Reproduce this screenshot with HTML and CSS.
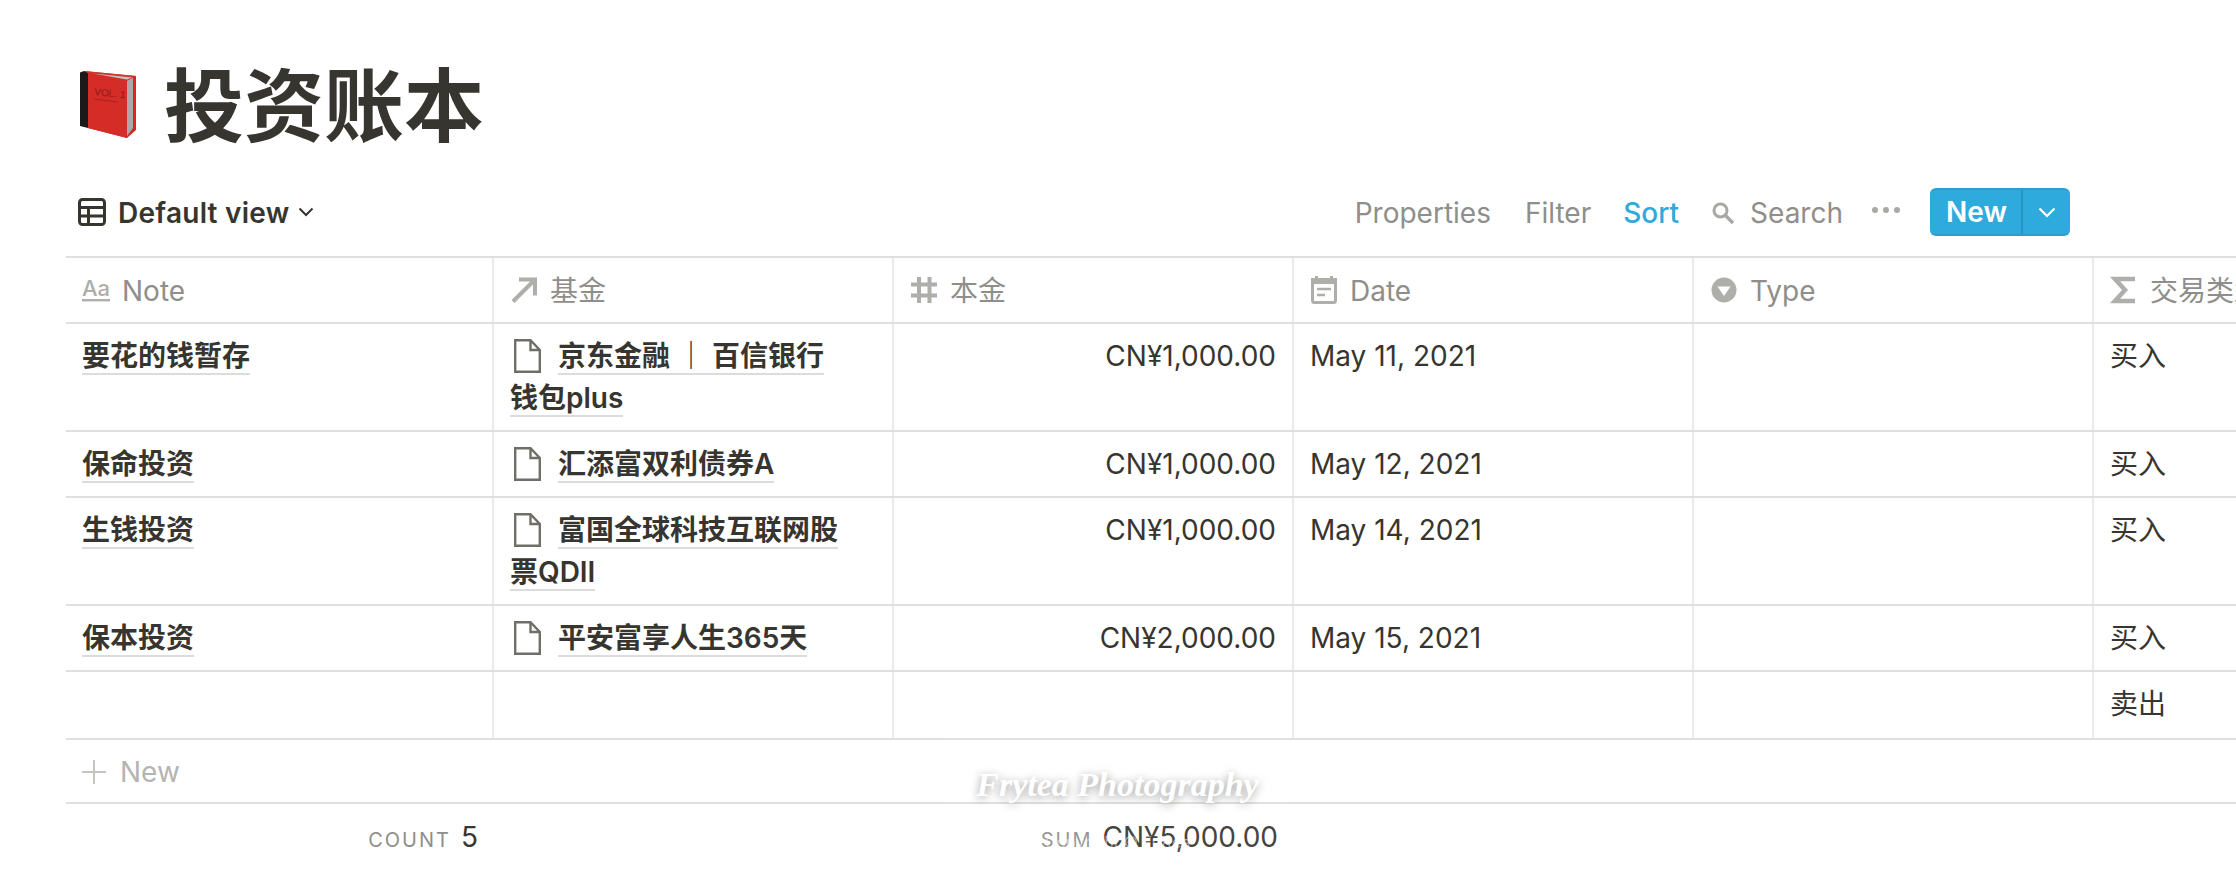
FILE: index.html
```html
<!DOCTYPE html>
<html lang="zh">
<head>
<meta charset="utf-8">
<title>投资账本</title>
<link rel="stylesheet" href="styles.css">
</head>
<body>
<svg class="defs" width="0" height="0" aria-hidden="true">
  <symbol id="page" viewBox="0 0 27 34"><path d="M1.200 1.200H16.500L25.800 11V32.800H1.200Z M16.500 1.200V11H25.800" fill="none" stroke="#6f6e69" stroke-width="2.400"/></symbol>
</svg>
<main class="page">
  <header class="title-row">
    <svg class="book" viewBox="0 0 56 68" aria-hidden="true">
      <path d="M4 1L56 6V60L47 68L8 58Z" fill="#d12a26"/>
      <path d="M0 2.500L4 1L8 3V58L0 56Z" fill="#1b1919"/>
      <path d="M4 1L56 6L47 11L8 3Z" fill="#c93a2e"/>
      <path d="M13 3.500L52 7.500L47 9.500Z" fill="#c4c4c4"/>
      <path d="M47 11L53 7.500V58L47 66Z" fill="#a9a9a9"/>
      <path d="M8 3L47 11V68L8 58Z" fill="#d62c28"/>
      <text class="book-vol" x="14" y="25" transform="rotate(6 14 25)">VOL. 1</text>
      <path d="M14 29L38 32" stroke="#a8221e" stroke-width="1.200"/>
    </svg>
    <h1 class="title">投资账本</h1>
  </header>

  <div class="toolbar">
    <div class="view-select">
      <svg class="view-icon" viewBox="0 0 28 28" aria-hidden="true"><rect x="1.500" y="1.500" width="25" height="25" rx="3" fill="none" stroke="#37352f" stroke-width="3"/><path d="M1.500 9.500H26.500M1.500 18H26.500M10.500 9.500V26.500" stroke="#37352f" stroke-width="3" fill="none"/></svg>
      <span class="view-name">Default view</span>
      <svg class="view-chevron" viewBox="0 0 16 10" aria-hidden="true"><path d="M1.500 1.500L8 8L14.500 1.500" fill="none" stroke="#37352f" stroke-width="2"/></svg>
    </div>
    <div class="actions">
      <span class="action action-first">Properties</span>
      <span class="action">Filter</span>
      <span class="action action-on">Sort</span>
      <span class="action search">
        <svg class="search-icon" viewBox="0 0 24 24" aria-hidden="true"><circle cx="9.500" cy="9.500" r="6.500" fill="none" stroke="#a9a8a5" stroke-width="3"/><path d="M14.500 14.500L22 22" stroke="#a9a8a5" stroke-width="3.400"/></svg>
        Search
      </span>
      <svg class="dots" viewBox="0 0 28 6" aria-hidden="true"><circle cx="3" cy="3" r="3" fill="#a9a8a5"/><circle cx="14" cy="3" r="3" fill="#a9a8a5"/><circle cx="25" cy="3" r="3" fill="#a9a8a5"/></svg>
      <div class="new-btn">
        <span class="new-label">New</span>
        <span class="new-arrow"><svg viewBox="0 0 18 11" aria-hidden="true"><path d="M1.500 1.500L9 9L16.500 1.500" fill="none" stroke="#fff" stroke-width="2.200"/></svg></span>
      </div>
    </div>
  </div>

  <section class="table">
    <div class="row head">
      <div class="cell"><svg class="hicon" viewBox="0 0 28 28" aria-hidden="true"><text class="aa" x="0" y="20">Aa</text><rect y="23" width="28" height="2.400" fill="#aeaeab"/></svg>Note</div>
      <div class="cell"><svg class="hicon" viewBox="0 0 28 28" aria-hidden="true"><path d="M9 3.500H25V19.500M24 4.500L3 25.500" fill="none" stroke="#aeaeab" stroke-width="4"/></svg>基金</div>
      <div class="cell"><svg class="hicon" viewBox="0 0 28 28" aria-hidden="true"><path d="M9 1V27M19.500 1V27M1 8.500H27M1 19.500H27" fill="none" stroke="#aeaeab" stroke-width="4"/></svg>本金</div>
      <div class="cell"><svg class="hicon" viewBox="0 0 28 28" aria-hidden="true"><path d="M6.500 0V4M21.500 0V4" stroke="#aeaeab" stroke-width="3"/><rect x="2.500" y="3.500" width="23" height="23" rx="2" fill="none" stroke="#aeaeab" stroke-width="3"/><rect x="1" y="2" width="26" height="6" fill="#aeaeab"/><path d="M7 13H21M7 19H15" stroke="#aeaeab" stroke-width="2.600"/></svg>Date</div>
      <div class="cell"><svg class="hicon" viewBox="0 0 28 28" aria-hidden="true"><circle cx="14" cy="14" r="12.500" fill="#aeaeab"/><path d="M7.500 10.500H20.500L14 20Z" fill="#fff"/></svg>Type</div>
      <div class="cell"><svg class="hicon" viewBox="0 0 28 28" aria-hidden="true"><path d="M25 3H5L15 14L5 25H25" fill="none" stroke="#aeaeab" stroke-width="4.500"/></svg>交易类型</div>
    </div>

    <div class="row">
      <div class="cell strong"><span class="link">要花的钱暂存</span></div>
      <div class="cell strong rel"><svg class="pg" aria-hidden="true"><use href="#page"/></svg><span class="link">京东金融 ｜ 百信银行钱包plus</span></div>
      <div class="cell num">CN¥1,000.00</div>
      <div class="cell">May 11, 2021</div>
      <div class="cell"></div>
      <div class="cell">买入</div>
    </div>
    <div class="row">
      <div class="cell strong"><span class="link">保命投资</span></div>
      <div class="cell strong rel"><svg class="pg" aria-hidden="true"><use href="#page"/></svg><span class="link">汇添富双利债券A</span></div>
      <div class="cell num">CN¥1,000.00</div>
      <div class="cell">May 12, 2021</div>
      <div class="cell"></div>
      <div class="cell">买入</div>
    </div>
    <div class="row">
      <div class="cell strong"><span class="link">生钱投资</span></div>
      <div class="cell strong rel"><svg class="pg" aria-hidden="true"><use href="#page"/></svg><span class="link">富国全球科技互联网股票QDII</span></div>
      <div class="cell num">CN¥1,000.00</div>
      <div class="cell">May 14, 2021</div>
      <div class="cell"></div>
      <div class="cell">买入</div>
    </div>
    <div class="row">
      <div class="cell strong"><span class="link">保本投资</span></div>
      <div class="cell strong rel"><svg class="pg" aria-hidden="true"><use href="#page"/></svg><span class="link">平安富享人生365天</span></div>
      <div class="cell num">CN¥2,000.00</div>
      <div class="cell">May 15, 2021</div>
      <div class="cell"></div>
      <div class="cell">买入</div>
    </div>
    <div class="row blank">
      <div class="cell"></div>
      <div class="cell"></div>
      <div class="cell"></div>
      <div class="cell"></div>
      <div class="cell"></div>
      <div class="cell">卖出</div>
    </div>

    <div class="add-row"><svg class="plus" viewBox="0 0 24 24" aria-hidden="true"><path d="M12 0V24M0 12H24" stroke="#c4c4c1" stroke-width="2"/></svg>New</div>

    <div class="row foot">
      <div class="calc"><span class="calc-label">COUNT</span><span>5</span></div>
      <div class="calc"></div>
      <div class="calc"><span class="calc-label">SUM</span><span>CN¥5,000.00</span></div>
    </div>
  </section>

  <div class="watermark">
    <div class="wm-name">Frytea Photography</div>
    <div class="wm-copy">Copyright © Frytea</div>
  </div>
</main>
</body>
</html>
```

FILE: styles.css
```css
* { box-sizing: border-box; }

html, body {
  margin: 0;
  height: 100%;
  overflow: hidden;
  background: #fff;
}

body {
  color: #37352f;
  font-family: Inter, "Noto Sans CJK SC", sans-serif;
  font-size: 28px;
  line-height: 42px;
}

.defs { position: absolute; }

.page {
  position: relative;
  width: 2236px;
  height: 896px;
  padding-left: 66px;
  overflow: hidden;
}

.title-row {
  display: flex;
  align-items: center;
  gap: 28px;
  height: 188px;
  padding: 18px 0 0 14px;
}

.book { width: 56px; height: 68px; margin-top: 2px; flex: none; }

.book-vol {
  font-family: "Liberation Sans", sans-serif;
  font-size: 10px;
  fill: #8c1a16;
}

.title {
  margin: -6px 0 0;
  font-family: "Noto Sans CJK SC", sans-serif;
  font-size: 80px;
  font-weight: 700;
  line-height: 96px;
}

.toolbar {
  display: flex;
  align-items: center;
  justify-content: space-between;
  width: 2004px;
  height: 48px;
  margin-bottom: 20px;
  padding-left: 12px;
}

.view-select {
  display: flex;
  align-items: center;
  font-weight: 600;
}

.view-name { padding-top: 2px; letter-spacing: 0.25px; }
.view-icon { width: 28px; height: 28px; margin-right: 12px; }
.view-chevron { width: 16px; height: 10px; margin-left: 9px; }

.actions {
  display: flex;
  align-items: center;
  color: #8f8e8a;
}

.action { margin-right: 32px; padding-top: 2px; white-space: nowrap; }
.action-first { margin-right: 34px; }
.action-on { margin-right: 32px; color: #2eaadc; font-weight: 500; }

.search { display: flex; align-items: center; }
.search-icon { width: 24px; height: 24px; margin-right: 15px; }

.dots { width: 28px; height: 6px; margin: -4px 30px 0 -3px; }

.new-btn {
  display: flex;
  width: 140px;
  height: 48px;
  background: #2eaadc;
  border-radius: 6px;
  border-top: 2px solid #2a9fce;
  border-bottom: 2px solid #2a9fce;
  color: #fff;
  font-weight: 600;
  overflow: hidden;
}

.new-label {
  display: flex;
  align-items: center;
  justify-content: center;
  width: 93px;
  padding: 0 0 0 2px;
  border-right: 2px solid #2793be;
}

.new-arrow {
  display: flex;
  flex: 1;
  align-items: center;
  justify-content: center;
}

.new-arrow svg { width: 18px; height: 11px; }

.table { width: 2170px; }

.row {
  display: grid;
  grid-template-columns: 428px 400px 400px 400px 400px 1fr;
  border-bottom: 2px solid #dfdfdd;
}

.cell {
  padding: 11px 16px;
  border-right: 2px solid #ebebea;
  word-break: break-all;
}

.cell:last-child { border-right: 0; white-space: nowrap; overflow: hidden; }

.head {
  height: 68px;
  border-top: 2px solid #dfdfdd;
  color: #8f8e8a;
}

.head .cell {
  display: flex;
  align-items: center;
  padding: 2px 16px 0;
}

.hicon {
  width: 28px;
  height: 28px;
  margin: -2px 12px 0 0;
  flex: none;
  overflow: visible;
}

.aa {
  font-family: Inter, sans-serif;
  font-size: 22px;
  font-weight: 500;
  fill: #aeaeab;
}

.strong { font-weight: 600; }
.rel { padding-right: 47px; }
.link { border-bottom: 2px solid #dcdcda; }

.pg {
  display: inline-block;
  width: 27px;
  height: 34px;
  margin: 0 17px 0 4px;
  vertical-align: -7px;
}

.num { text-align: right; }
.blank { height: 68px; }

.add-row {
  display: flex;
  align-items: center;
  height: 64px;
  padding: 2px 0 0 16px;
  border-bottom: 2px solid #dfdfdd;
  color: #b4b4b1;
}

.plus { width: 24px; height: 24px; margin-right: 14px; }

.foot { border-bottom: 0; }

.calc {
  display: flex;
  align-items: center;
  justify-content: flex-end;
  gap: 10px;
  height: 66px;
  padding-right: 16px;
}

.calc-label {
  margin-top: 6px;
  color: #8f8e8a;
  font-size: 20px;
  letter-spacing: 2px;
}

.watermark {
  position: absolute;
  left: 945px;
  top: 718px;
  width: 345px;
  height: 178px;
  background: rgba(255, 255, 255, 0.08);
  text-align: center;
  pointer-events: none;
}

.wm-name {
  margin-top: 37px;
  color: #fff;
  font-family: "Liberation Serif", serif;
  font-size: 34px;
  font-style: italic;
  font-weight: 700;
  line-height: 60px;
  text-shadow: 0 2px 10px rgba(0, 0, 0, 0.4);
  white-space: nowrap;
}

.wm-copy {
  margin-top: 15px;
  color: rgba(255, 255, 255, 0.5);
  font-size: 16px;
  line-height: 24px;
}
```
